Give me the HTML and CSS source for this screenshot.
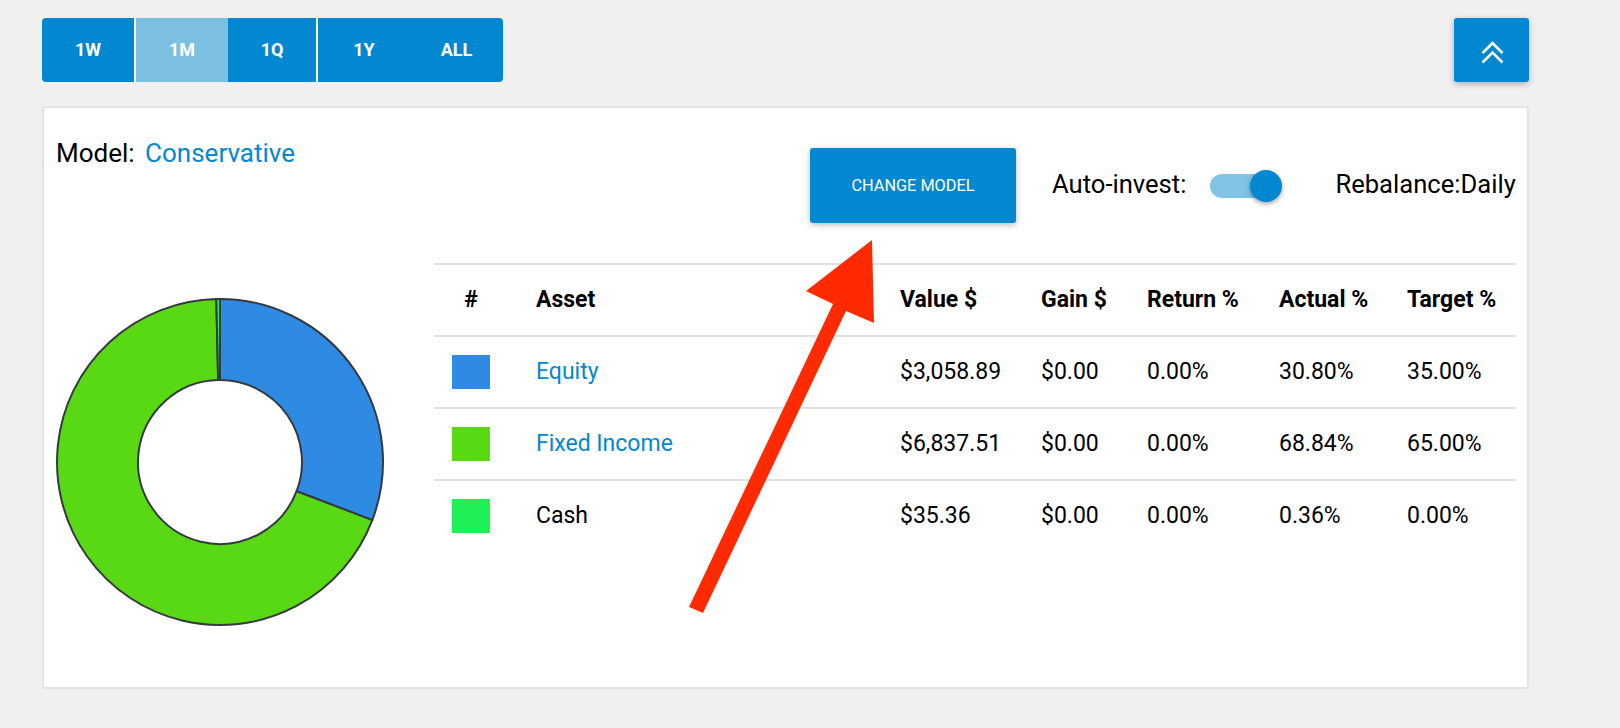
FILE: index.html
```html
<!DOCTYPE html>
<html lang="en">
<head>
<meta charset="utf-8">
<title>Portfolio allocation</title>
<link rel="stylesheet" href="styles.css">
</head>
<body>
<div class="page">
  <div class="topbar">
    <div class="range-group">
      <button class="range">1W</button>
      <button class="range sep active">1M</button>
      <button class="range narrow">1Q</button>
      <button class="range sep">1Y</button>
      <button class="range wide">ALL</button>
    </div>
    <button class="up-btn" aria-label="Collapse">
      <svg class="up-icon" viewBox="0 0 23 23" width="23" height="23">
        <polyline points="1.5,12 11.5,2 21.5,12" />
        <polyline points="1.5,21.5 11.5,11.5 21.5,21.5" />
      </svg>
    </button>
  </div>

  <div class="card">
    <div class="left">
      <div class="model"><span>Model:</span> <a class="link model-link">Conservative</a></div>
      <svg class="donut" viewBox="0 0 330 330" width="330" height="330">
        <path class="seg equity" d="M165,2 A163,163 0 0 1 317.30,223.09 L241.62,194.22 A82,82 0 0 0 165,83 Z"/>
        <path class="seg fixed" d="M317.30,223.09 A163,163 0 1 1 161.30,2.04 L163.14,83.02 A82,82 0 1 0 241.62,194.22 Z"/>
        <path class="seg cash" d="M161.30,2.04 A163,163 0 0 1 165,2 L165,83 A82,82 0 0 0 163.14,83.02 Z"/>
      </svg>
    </div>
    <div class="right">
      <div class="controls">
        <button class="change-btn">Change model</button>
        <span class="auto-label">Auto-invest:</span>
        <span class="toggle"><span class="track"></span><span class="knob"></span></span>
        <span class="rebalance">Rebalance:Daily</span>
      </div>
      <table class="alloc">
        <colgroup>
          <col class="w-num"><col class="w-asset"><col class="w-value"><col class="w-gain"><col class="w-return"><col class="w-actual"><col class="w-target">
        </colgroup>
        <thead>
          <tr><th class="c-num">#</th><th>Asset</th><th>Value $</th><th>Gain $</th><th>Return %</th><th>Actual %</th><th>Target %</th></tr>
        </thead>
        <tbody>
          <tr><td class="c-num"><span class="swatch sw-equity"></span></td><td><a class="link">Equity</a></td><td>$3,058.89</td><td>$0.00</td><td>0.00%</td><td>30.80%</td><td>35.00%</td></tr>
          <tr><td class="c-num"><span class="swatch sw-fixed"></span></td><td><a class="link">Fixed Income</a></td><td>$6,837.51</td><td>$0.00</td><td>0.00%</td><td>68.84%</td><td>65.00%</td></tr>
          <tr><td class="c-num"><span class="swatch sw-cash"></span></td><td>Cash</td><td>$35.36</td><td>$0.00</td><td>0.00%</td><td>0.36%</td><td>0.00%</td></tr>
        </tbody>
      </table>
    </div>
  </div>
</div>

<svg class="arrow" viewBox="0 0 1620 728" width="1620" height="728">
  <polygon points="689,607 833,304 806,291 872,240 874,323 846,311 703,613" />
</svg>
</body>
</html>
```

FILE: styles.css
```css
* { box-sizing: border-box; }

body {
  margin: 0;
  background: #f0f0f0;
  font-family: Roboto, "Liberation Sans", Arial, sans-serif;
  color: #000;
}

.page {
  padding: 18px 91px 0 42px;
}

.topbar {
  display: flex;
  justify-content: space-between;
  align-items: flex-start;
  height: 64px;
}

.range-group {
  display: flex;
  height: 64px;
  border-radius: 4px;
  overflow: hidden;
}

.range {
  width: 92px;
  height: 64px;
  padding: 0 0 2px;
  border: 0;
  background: #0288d1;
  color: #fff;
  font-family: Roboto, "Liberation Sans", Arial, sans-serif;
  font-size: 18px;
  font-weight: 700;
}

.range.sep { width: 94px; border-left: 2px solid #fff; }
.range.active { background: #7cc0e1; }
.range.narrow { width: 88px; }
.range.wide { width: 93px; }

.up-btn {
  width: 75px;
  height: 64px;
  padding: 4px 0 0 2px;
  border: 0;
  border-radius: 3px;
  background: #0288d1;
  box-shadow: 0 2px 6px rgba(0, 0, 0, 0.28);
  display: flex;
  align-items: center;
  justify-content: center;
}

.up-icon polyline {
  fill: none;
  stroke: #fff;
  stroke-width: 2.6;
}

.card {
  margin-top: 24px;
  height: 583px;
  border: 2px solid #e3e3e3;
  border-radius: 3px;
  background: #fff;
  display: flex;
  padding: 0 11px 0 12px;
}

.left {
  width: 378px;
  flex-shrink: 0;
  padding-top: 30px;
}

.model {
  font-size: 26px;
  line-height: 30px;
  white-space: nowrap;
}

.link {
  color: #0288d1;
  text-decoration: none;
}

.model-link { margin-left: 4px; }

.donut {
  display: block;
  margin: 129px 0 0 -1px;
}

.seg {
  stroke: #343a40;
  stroke-width: 2;
  stroke-linejoin: round;
}
.seg.equity { fill: #2e8ae3; }
.seg.fixed { fill: #58d914; }
.seg.cash { fill: #1ef055; }

.right {
  flex: 1;
  min-width: 0;
  padding-top: 40px;
}

.controls {
  display: flex;
  align-items: center;
  height: 75px;
  padding-left: 376px;
  white-space: nowrap;
}

.controls > * { flex-shrink: 0; }

.change-btn {
  width: 206px;
  height: 75px;
  padding: 0;
  border: 0;
  border-radius: 3px;
  background: #0288d1;
  color: #fff;
  font-family: Roboto, "Liberation Sans", Arial, sans-serif;
  font-size: 16.3px;
  font-weight: 400;
  text-transform: uppercase;
  box-shadow: 0 2px 5px rgba(0, 0, 0, 0.16), 0 2px 10px rgba(0, 0, 0, 0.12);
}

.auto-label {
  margin-left: 36px;
  padding-bottom: 4px;
  font-size: 25.6px;
}

.toggle {
  position: relative;
  margin-left: 24px;
  width: 72px;
  height: 32px;
}

.track {
  position: absolute;
  left: 0;
  top: 4px;
  width: 60px;
  height: 24px;
  border-radius: 12px;
  background: #80c4e6;
}

.knob {
  position: absolute;
  left: 40px;
  top: 0;
  width: 32px;
  height: 32px;
  border-radius: 50%;
  background: #0288d1;
  box-shadow: 0 2px 5px rgba(0, 0, 0, 0.35);
}

.rebalance {
  margin-left: 53px;
  padding-bottom: 4px;
  font-size: 25.6px;
}

.alloc {
  margin-top: 40px;
  width: 1082px;
  table-layout: fixed;
  border-collapse: separate;
  border-spacing: 0;
  font-size: 23px;
}

.w-num { width: 102px; }
.w-asset { width: 364px; }
.w-value { width: 141px; }
.w-gain { width: 106px; }
.w-return { width: 132px; }
.w-actual { width: 128px; }
.w-target { width: 109px; }

.alloc tr { height: 72px; }

.alloc th,
.alloc td {
  padding: 0 0 2px;
  border-top: 2px solid #dee2e6;
  text-align: left;
  vertical-align: middle;
  white-space: nowrap;
}

.alloc th { font-weight: 700; }

.alloc .c-num {
  text-align: center;
  padding-right: 28px;
}

.alloc td.c-num { padding-bottom: 0; }

.swatch {
  display: inline-block;
  width: 38px;
  height: 34px;
  vertical-align: middle;
}
.sw-equity { background: #2e8ae3; }
.sw-fixed { background: #58d914; }
.sw-cash { background: #1ef055; }

.arrow {
  position: absolute;
  left: 0;
  top: 0;
  pointer-events: none;
}

.arrow polygon { fill: #ff2a00; }
```
